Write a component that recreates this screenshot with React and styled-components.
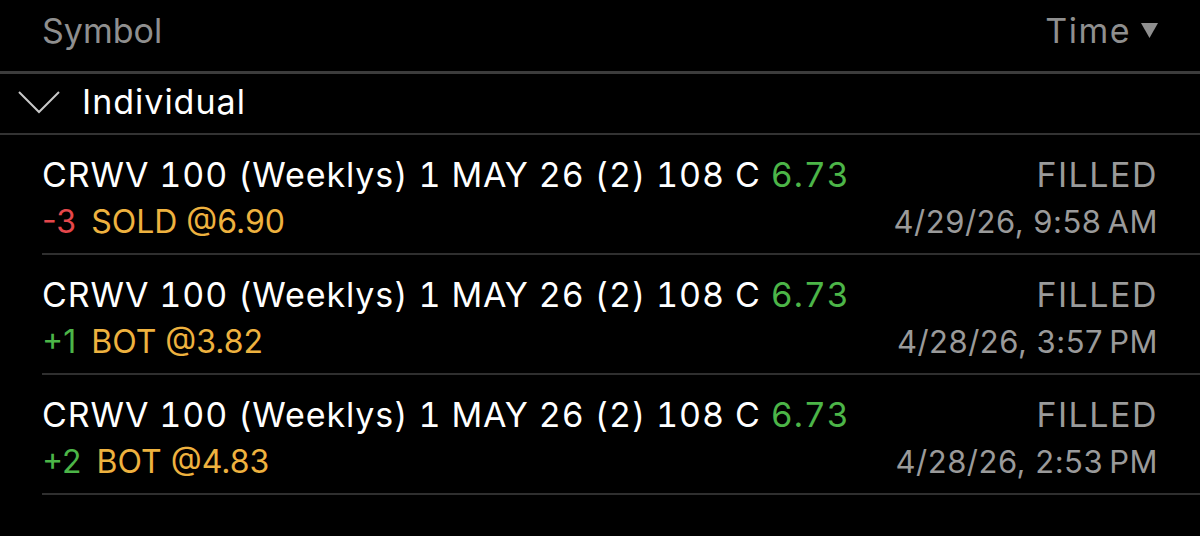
import React from 'react';
import styled, { createGlobalStyle } from 'styled-components';

const GlobalStyle = createGlobalStyle`
  html, body {
    margin: 0;
    padding: 0;
    background: #000;
  }
  body {
    font-family: Inter, "Noto Sans", "Liberation Sans", sans-serif;
  }
`;

const Screen = styled.div`
  width: 1200px;
  height: 536px;
  background: #000;
  overflow: hidden;
`;

const Header = styled.div`
  height: 61px;
  padding: 0 42px 10px;
  display: flex;
  align-items: center;
  justify-content: space-between;
  border-bottom: 3px solid #3c3c3c;
  color: #8f8f8f;
  font-size: 34px;
`;

const Sort = styled.div`
  display: flex;
  align-items: center;
  gap: 10px;
  letter-spacing: 1.5px;
`;

const Group = styled.div`
  height: 55px;
  padding: 0 0 4px 18px;
  display: flex;
  align-items: center;
  gap: 22px;
  border-bottom: 2px solid #333;
  color: #fff;
  font-size: 34px;
  letter-spacing: 1px;
`;

const List = styled.div`
  padding-left: 42px;
`;

const Row = styled.div`
  height: 110px;
  padding: 8px 42px 0 0;
  display: flex;
  justify-content: space-between;
  align-items: center;
  border-bottom: 2px solid #2f2f2f;
`;

const Col = styled.div`
  display: flex;
  flex-direction: column;
  align-items: ${(p) => (p.$right ? 'flex-end' : 'flex-start')};
`;

const Title = styled.div`
  font-size: 34px;
  line-height: 48px;
  white-space: nowrap;
  color: ${(p) => p.$color || '#fff'};
  font-variant-numeric: tabular-nums;
  letter-spacing: ${(p) => p.$spacing || '0.9px'};
`;

const Sub = styled.div`
  font-size: ${(p) => p.$size || '32px'};
  line-height: 46px;
  white-space: nowrap;
  color: ${(p) => p.$color || '#fff'};
  letter-spacing: ${(p) => p.$spacing || '0'};
`;

const Qty = styled.span`
  color: ${(p) => (p.$neg ? '#e5474b' : '#4cb548')};
  margin-right: 15px;
`;

const Action = styled.span`
  color: #eeb23f;
`;

const Price = styled.span`
  color: #4cb548;
`;

const orders = [
  { qty: '-3', neg: true, action: 'SOLD @6.90', time: '4/29/26, 9:58\u2009AM' },
  { qty: '+1', neg: false, action: 'BOT @3.82', time: '4/28/26, 3:57\u2009PM' },
  { qty: '+2', neg: false, action: 'BOT @4.83', time: '4/28/26, 2:53\u2009PM' },
];

export default function App() {
  return (
    <Screen>
      <GlobalStyle />
      <Header>
        <span>Symbol</span>
        <Sort>
          <span>Time</span>
          <svg width="17" height="15" viewBox="0 0 17 15">
            <path d="M0 0 H17 L8.5 15 Z" fill="#8f8f8f" />
          </svg>
        </Sort>
      </Header>
      <Group>
        <svg width="42" height="24" viewBox="0 0 42 24">
          <path d="M1 2 L21 22 L41 2" fill="none" stroke="#c8c8c8" strokeWidth="2" />
        </svg>
        <span>Individual</span>
      </Group>
      <List>
        {orders.map((o, i) => (
          <Row key={i}>
            <Col>
              <Title>
                CRWV 100 (Weeklys) 1 MAY 26 (2) 108 C <Price>6.73</Price>
              </Title>
              <Sub>
                <Qty $neg={o.neg}>{o.qty}</Qty>
                <Action>{o.action}</Action>
              </Sub>
            </Col>
            <Col $right>
              <Title $color="#9a9a9a" $spacing="1.5px">FILLED</Title>
              <Sub $color="#9a9a9a" $size="31px" $spacing="0.5px">{o.time}</Sub>
            </Col>
          </Row>
        ))}
      </List>
    </Screen>
  );
}
